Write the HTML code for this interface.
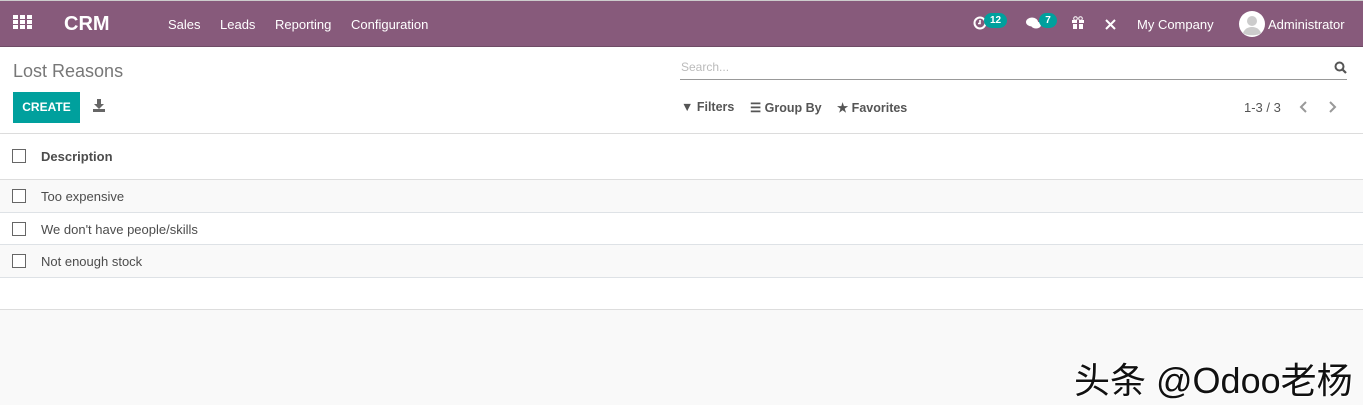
<!DOCTYPE html>
<html><head><meta charset="utf-8"><style>
*{box-sizing:border-box;margin:0;padding:0}
body{width:1363px;height:405px;overflow:hidden;background:#f9f9f9;font-family:"Liberation Sans",Arial,sans-serif;color:#4c4c4c;position:relative}
.top{position:absolute;left:0;top:0;width:1363px;height:1px;background:#ccc}
.nav{position:absolute;left:0;top:1px;width:1363px;height:46px;background:#875a7b;color:#fff;border-bottom:1px solid #6f4c66}
.nav span{position:absolute;font-size:13px;top:16px}
.grid{position:absolute;left:13px;top:14px;width:19px;height:15px}
.grid i{position:absolute;width:5px;height:4px;background:#fff}
.badge{position:absolute;background:#00a09d;color:#fff;font-size:10px;font-weight:bold;border-radius:8px;height:15px;line-height:15px;text-align:center;top:12px}
.cp{position:absolute;left:0;top:47px;width:1363px;height:87px;background:#fff;border-bottom:1px solid #ddd}
.list{position:absolute;left:0;top:134px;width:1363px;height:176px;background:#fff;border-bottom:1px solid #ddd}
.row{position:absolute;left:0;width:1363px;border-bottom:1px solid #dee2e6;font-size:13px}
.cb{position:absolute;left:12px;width:14px;height:14px;border:1px solid #666;background:#fff}
.row span{position:absolute;left:41px}
</style></head><body>
<div class="top"></div>
<div class="nav">
 <div class="grid"><i style="left:0;top:0"></i><i style="left:7px;top:0"></i><i style="left:14px;top:0"></i><i style="left:0;top:5px"></i><i style="left:7px;top:5px"></i><i style="left:14px;top:5px"></i><i style="left:0;top:10px"></i><i style="left:7px;top:10px"></i><i style="left:14px;top:10px"></i></div>
 <span style="left:64px;top:12px;font-size:20px;font-weight:bold">CRM</span>
 <span style="left:168px">Sales</span>
 <span style="left:220px">Leads</span>
 <span style="left:275px">Reporting</span>
 <span style="left:351px">Configuration</span>
 <svg style="position:absolute;left:973px;top:15px" width="14" height="14" viewBox="0 0 14 14"><circle cx="7" cy="7" r="5.5" fill="none" stroke="#fff" stroke-width="2"/><path d="M7 4v3.5h-2" stroke="#fff" stroke-width="1.6" fill="none"/></svg>
 <div class="badge" style="left:984px;width:23px">12</div>
 <svg style="position:absolute;left:1026px;top:15px" width="16" height="14" viewBox="0 0 16 14"><ellipse cx="6" cy="6" rx="6" ry="4.5" fill="#fff"/><ellipse cx="10" cy="9" rx="5" ry="3.5" fill="#fff"/></svg>
 <div class="badge" style="left:1039px;width:18px">7</div>
 <svg style="position:absolute;left:1071px;top:15px" width="14" height="14" viewBox="0 0 14 14"><rect x="1" y="4" width="12" height="3" fill="#fff"/><rect x="2" y="8" width="10" height="5" fill="#fff"/><rect x="6" y="4" width="2" height="9" fill="#875a7b"/><circle cx="4.5" cy="2.5" r="1.8" fill="none" stroke="#fff"/><circle cx="9.5" cy="2.5" r="1.8" fill="none" stroke="#fff"/></svg>
 <svg style="position:absolute;left:1105px;top:18px" width="11" height="11" viewBox="0 0 11 11"><path d="M1 10L10 1M1 1l9 9" stroke="#fff" stroke-width="2"/></svg>
 <span style="left:1137px">My Company</span>
 <svg style="position:absolute;left:1239px;top:10px" width="26" height="26" viewBox="0 0 26 26"><circle cx="13" cy="13" r="13" fill="#fff"/><circle cx="13" cy="10" r="5" fill="#ccc"/><path d="M4 22c2-5 6-6 9-6s7 1 9 6c-3 3-15 3-18 0z" fill="#ccc"/></svg>
 <span style="left:1268px">Administrator</span>
</div>
<div class="cp">
 <div style="position:absolute;left:13px;top:14px;font-size:18px;color:#777">Lost Reasons</div>
 <div style="position:absolute;left:13px;top:45px;width:67px;height:31px;background:#00a09d;color:#fff;font-size:12px;font-weight:bold;line-height:31px;text-align:center">CREATE</div>
 <svg style="position:absolute;left:93px;top:52px" width="12" height="13" viewBox="0 0 12 13"><path d="M4 0h4v5h3L6 10 1 5h3z" fill="#666"/><rect x="0" y="10" width="12" height="3" fill="#666"/></svg>
 <div style="position:absolute;left:681px;top:13px;font-size:12px;color:#bbb">Search...</div>
 <div style="position:absolute;left:680px;top:32px;width:667px;height:1px;background:#999"></div>
 <svg style="position:absolute;left:1334px;top:14px" width="13" height="13" viewBox="0 0 13 13"><circle cx="5.5" cy="5.5" r="4" fill="none" stroke="#555" stroke-width="2"/><path d="M8.5 8.5l3.5 3.5" stroke="#555" stroke-width="2.2"/></svg>
 <div style="position:absolute;left:681px;top:53px;font-size:12.5px;font-weight:bold;color:#555">▼ Filters</div>
 <div style="position:absolute;left:750px;top:53px;font-size:12.5px;font-weight:bold;color:#555">☰ Group By</div>
 <div style="position:absolute;left:837px;top:53px;font-size:12.5px;font-weight:bold;color:#555">★ Favorites</div>
 <div style="position:absolute;left:1244px;top:53px;font-size:13px;color:#555">1-3 / 3</div>
 <svg style="position:absolute;left:1299px;top:54px" width="10" height="12" viewBox="0 0 10 12"><path d="M7 1L2 6l5 5" stroke="#999" stroke-width="2" fill="none"/></svg>
 <svg style="position:absolute;left:1327px;top:54px" width="10" height="12" viewBox="0 0 10 12"><path d="M3 1l5 5-5 5" stroke="#999" stroke-width="2" fill="none"/></svg>
</div>
<div class="list">
 <div class="row" style="top:0;height:46px;background:#fff;border-bottom:1px solid #ddd;box-shadow:0 2px 3px rgba(0,0,0,.06)"><div class="cb" style="top:15px"></div><span style="top:15px;font-weight:bold">Description</span></div>
 <div class="row" style="top:46px;height:33px;background:#f9f9f9"><div class="cb" style="top:9px"></div><span style="top:9px">Too expensive</span></div>
 <div class="row" style="top:79px;height:32px;background:#fff"><div class="cb" style="top:9px"></div><span style="top:9px">We don't have people/skills</span></div>
 <div class="row" style="top:111px;height:33px;background:#f9f9f9"><div class="cb" style="top:9px"></div><span style="top:9px">Not enough stock</span></div>
</div>
<div style="position:absolute;left:1074px;top:352px;font-size:36px;color:#111;font-family:'Liberation Sans','Noto Sans CJK SC',sans-serif;text-shadow:1px 1px 0 #fff,-1px -1px 0 #fff;white-space:nowrap;letter-spacing:0">头条 @Odoo老杨</div>
</body></html>
